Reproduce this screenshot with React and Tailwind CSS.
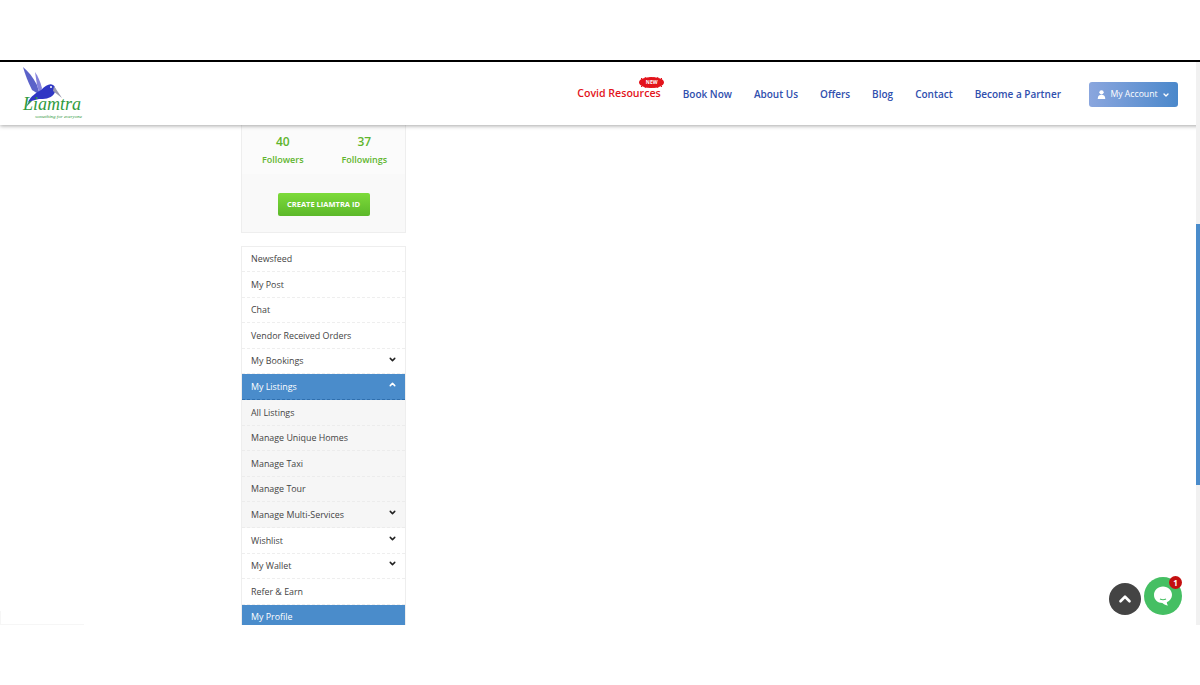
import React from 'react'
import { ChevronDown, ChevronUp } from 'lucide-react'

const menu = [
  { label: 'Newsfeed' },
  { label: 'My Post' },
  { label: 'Chat' },
  { label: 'Vendor Received Orders' },
  { label: 'My Bookings', arrow: 'down' },
  { label: 'My Listings', arrow: 'up', active: true },
  { label: 'All Listings', sub: true },
  { label: 'Manage Unique Homes', sub: true },
  { label: 'Manage Taxi', sub: true },
  { label: 'Manage Tour', sub: true },
  { label: 'Manage Multi-Services', arrow: 'down', sub: true },
  { label: 'Wishlist', arrow: 'down' },
  { label: 'My Wallet', arrow: 'down' },
  { label: 'Refer & Earn' },
  { label: 'My Profile', active: true },
]

const links = ['Book Now', 'About Us', 'Offers', 'Blog', 'Contact', 'Become a Partner']

function Logo() {
  return (
    <div className="relative w-[66px] h-[58px] ml-[20px] mt-[3px]">
      <svg viewBox="0 0 66 58" className="absolute inset-0 w-full h-full">
        <path d="M3 2 C8 6 13 12 17 20 L20 30 L12 25 C8 17 5 9 3 2 Z" fill="#5b62c9" />
        <path d="M15 7 C18 11 20 16 22 23 L20 30 L17 20 Z" fill="#8583dc" />
        <path d="M8 37 C11 31 16 28 21 25 C26 20 30 18 33 20 C36 22 36 26 34 29 C30 34 24 34 19 34 C15 35 11 36 8 37 Z" fill="#2f37c4" />
        <path d="M34 21 L42 33 L33 26 Z" fill="#9a9ab0" />
        <path d="M9 36 L6 42 L12 36 Z" fill="#2e8b57" />
        <circle cx="31" cy="22" r="1" fill="#ffffff" />
      </svg>
      <span className="absolute left-[3px] top-[30px] text-[18px] leading-[18px] italic text-[#2f9a3d] font-['Liberation_Serif',serif]">Liamtra</span>
      <span className="absolute left-[15px] top-[49px] text-[5px] leading-[6px] italic text-[#2f9a3d] font-['Liberation_Serif',serif] whitespace-nowrap">something for everyone</span>
    </div>
  )
}

function NewBadge() {
  return (
    <span className="absolute left-[62px] top-[-9px] w-[25px] h-[11px] flex items-center justify-center">
      <svg viewBox="0 0 25 11" className="absolute inset-0 w-full h-full">
        <ellipse cx="12.5" cy="5.5" rx="12.5" ry="5.5" fill="#e3131b" />
        <path d="M2 1 L4 3 M6 0 L7 2 M11 0 L11 1 M15 0 L15 1 M19 0 L18 2 M23 1 L21 3 M2 10 L4 8 M6 11 L7 9 M11 11 L11 10 M15 11 L15 10 M19 11 L18 9 M23 10 L21 8" stroke="#e3131b" strokeWidth="1" />
      </svg>
      <span className="relative text-white text-[5px] leading-[11px] font-bold">NEW</span>
    </span>
  )
}

function Header() {
  return (
    <header className="relative z-10 h-[63px] bg-white flex items-start justify-between shadow-[0_1px_4px_rgba(0,0,0,0.35)] pr-[22px]">
      <Logo />
      <nav className="flex items-center h-full gap-[22px] pt-[1px] text-[10px] font-semibold text-[#2f4fae]">
        <a className="relative text-[10.6px] text-[#e3131b]">
          Covid Resources
          <NewBadge />
        </a>
        {links.map(l => <a key={l}>{l}</a>)}
        <button className="ml-[6px] w-[89px] h-[25px] rounded-[3px] bg-gradient-to-r from-[#8aa6de] to-[#4a88cb] text-white text-[8.7px] font-normal flex items-center justify-center gap-[4px] pt-[1px]">
          <svg viewBox="0 0 10 10" className="w-[9px] h-[9px]" fill="#ffffff">
            <circle cx="5" cy="2.6" r="2.4" />
            <path d="M0.8 10 C0.8 6.6 2.4 5.4 5 5.4 C7.6 5.4 9.2 6.6 9.2 10 Z" />
          </svg>
          My Account
          <ChevronDown size={8} strokeWidth={4} />
        </button>
      </nav>
    </header>
  )
}

function ProfileCard() {
  return (
    <div className="h-[108px] bg-[#f9f9f9] border border-t-0 border-[#eeeeee]">
      <div className="h-[49px] flex pt-[9px] bg-[#fbfbfb] text-[#5fb52e] font-semibold text-center">
        <div className="flex-1">
          <div className="text-[12px] leading-[16px]">40</div>
          <div className="text-[9px] leading-[19px]">Followers</div>
        </div>
        <div className="flex-1">
          <div className="text-[12px] leading-[16px]">37</div>
          <div className="text-[9px] leading-[19px]">Followings</div>
        </div>
      </div>
      <div className="flex justify-center pt-[19px]">
        <button className="w-[92px] h-[23px] rounded-[2px] bg-gradient-to-b from-[#7ddb3a] to-[#5cb82a] text-white text-[7.5px] font-bold">CREATE LIAMTRA ID</button>
      </div>
    </div>
  )
}

function MenuRow({ item }) {
  let tone = 'bg-white text-[#444444] border-[#eeeeee]'
  if (item.sub) tone = 'bg-[#f6f6f6] text-[#444444] border-[#ececec]'
  if (item.active) tone = 'bg-[#4a8ccb] text-white border-[#2f6fae]'
  return (
    <div className={`h-[25.6px] shrink-0 flex items-center justify-between pl-[9px] pr-[8px] text-[8.9px] border-b border-dashed ${tone}`}>
      <span>{item.label}</span>
      {item.arrow === 'down' && <ChevronDown size={9} strokeWidth={4} className="mb-[4px] text-[#222222]" />}
      {item.arrow === 'up' && <ChevronUp size={9} strokeWidth={4} className="mb-[4px]" />}
    </div>
  )
}

export default function App() {
  return (
    <div className="relative h-[685px] bg-white overflow-hidden font-['Open_Sans',sans-serif]">
      <div className="h-[60px]" />
      <div className="relative h-[565px] border-t-2 border-black overflow-hidden flex flex-col">
        <Header />
        <main className="flex-1 min-h-0 pl-[241px]">
          <aside className="w-[165px] h-full">
            <ProfileCard />
            <div className="mt-[12.5px] border border-[#eeeeee] border-b-0">
              {menu.map(m => <MenuRow key={m.label} item={m} />)}
            </div>
          </aside>
        </main>
        {/* page scrollbar */}
        <div className="absolute z-20 right-0 top-0 bottom-0 w-[4px] bg-[#f1f1f1]">
          <div className="mt-[162px] h-[261px] bg-[#4a8ccb]" />
        </div>
        <button className="absolute z-20 left-[1109px] top-[521px] w-[32px] h-[32px] rounded-full bg-[#444444] text-white flex items-center justify-center">
          <ChevronUp size={18} strokeWidth={3.5} />
        </button>
        <div className="absolute z-20 left-[1144px] top-[515px] w-[38px] h-[38px] rounded-full bg-[#45bf63] flex items-center justify-center">
          <svg viewBox="0 0 24 24" className="w-[24px] h-[24px]">
            <path d="M12 2.5 C6.8 2.5 3 6.2 3 11 C3 15.5 6.6 19 11.4 19 C13 20.6 15 21.4 17 21.6 C16.2 20.6 15.8 19.4 15.8 18.2 C18.9 16.8 21 14.2 21 11 C21 6.2 17.2 2.5 12 2.5 Z" fill="#ffffff" />
            <path d="M9 15 C11 16 13 16 15 15" stroke="#45bf63" strokeWidth="1.2" fill="none" />
          </svg>
          <span className="absolute right-0 top-[-1px] w-[13px] h-[13px] rounded-full bg-[#c40f0f] text-white text-[8px] leading-[13px] font-bold text-center">1</span>
        </div>
        {/* faint badge left behind at the bottom corner */}
        <div className="absolute z-0 left-0 bottom-0 w-[84px] h-[14px] border-b border-l border-[#f6f6f6]" />
      </div>
    </div>
  )
}
